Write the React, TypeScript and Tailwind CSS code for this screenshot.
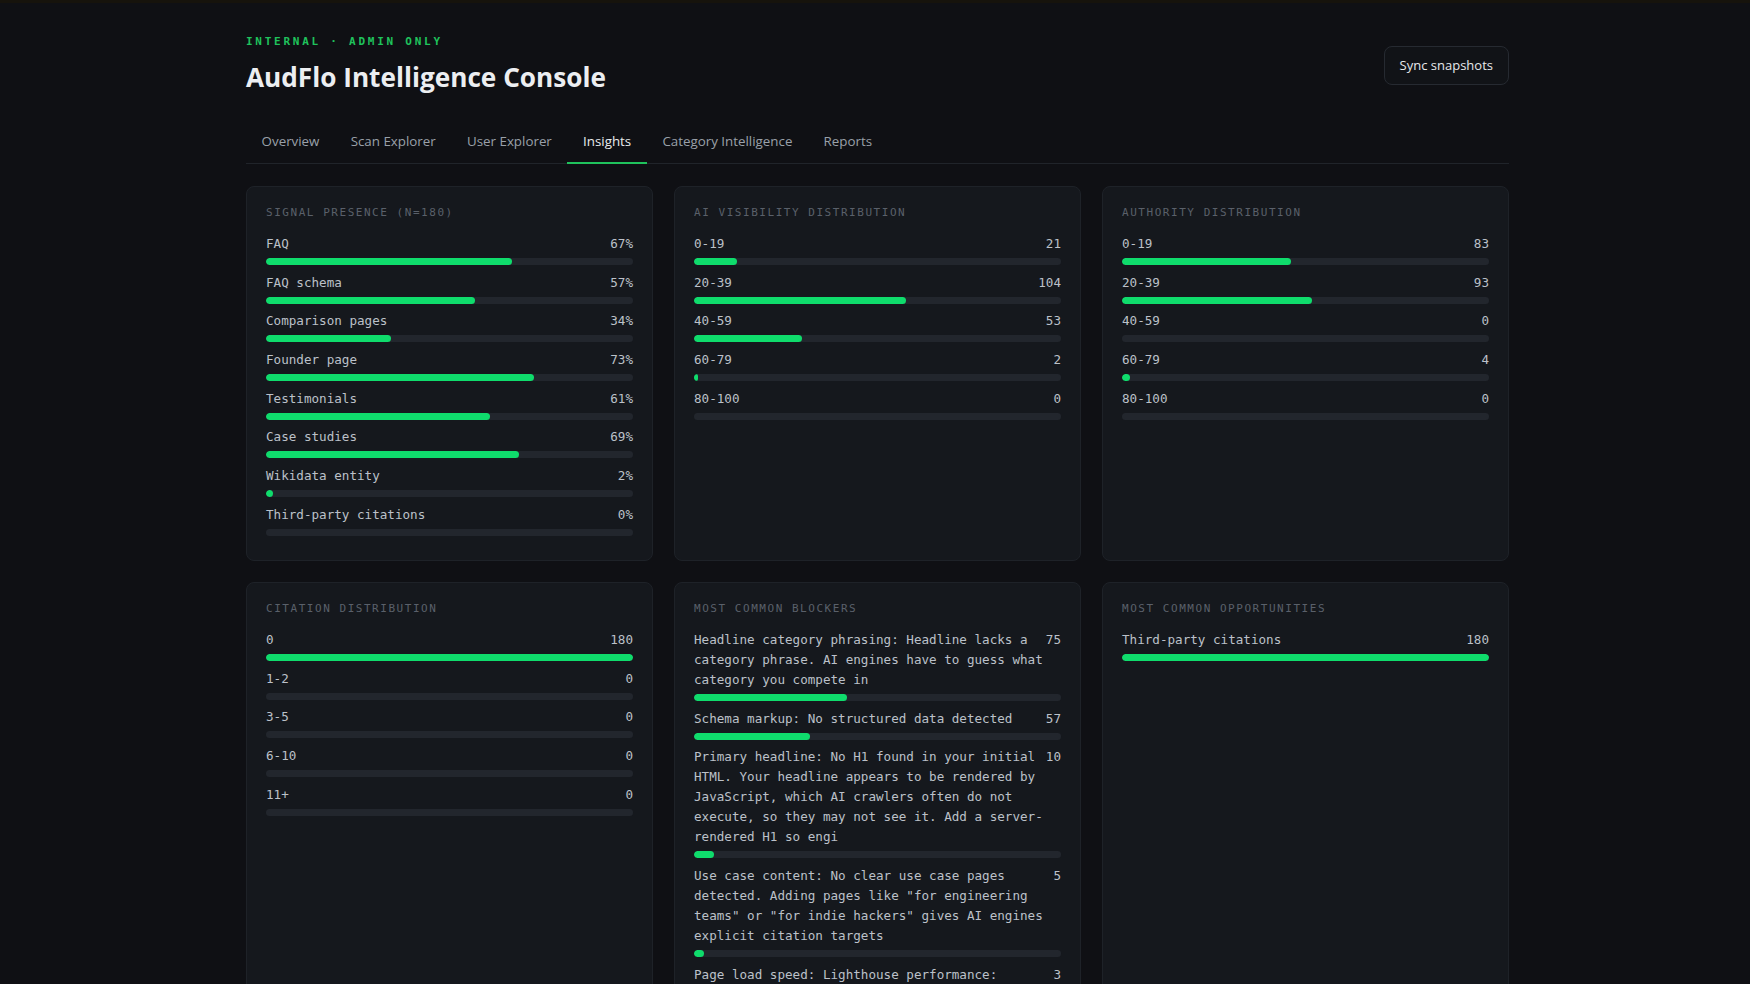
import React from "react";

type Row = { label: string; value: string; pct: number };

const MONO = "font-['DejaVu_Sans_Mono','Liberation_Mono',monospace]";

function Bar({ pct }: { pct: number }) {
  return (
    <div className="mt-[4px] h-[7px] w-full rounded-full bg-[#22262d] overflow-hidden">
      <div className="h-full rounded-full bg-[#0fdc6c]" style={{ width: `${pct}%` }} />
    </div>
  );
}

function Card({ title, rows }: { title: string; rows: Row[] }) {
  return (
    <div className="rounded-lg border border-[#1e2228] bg-[#15181d] px-[19px] pt-[20px] pb-[24px]">
      <div className={`${MONO} text-[11px] leading-[12px] tracking-[0.14em] text-[#5a606a] uppercase`}>{title}</div>
      <div className="mt-[15px] flex flex-col gap-[7.7px]">
        {rows.map((r, i) => (
          <div key={i}>
            <div className={`${MONO} flex items-start justify-between text-[12.6px] leading-[20px] text-[#bcc1c9]`}>
              <span className="min-w-0 flex-1">{r.label}</span>
              <span className="shrink-0 text-right">{r.value}</span>
            </div>
            <Bar pct={r.pct} />
          </div>
        ))}
      </div>
    </div>
  );
}

const signal: Row[] = [
  { label: "FAQ", value: "67%", pct: 67 },
  { label: "FAQ schema", value: "57%", pct: 57 },
  { label: "Comparison pages", value: "34%", pct: 34 },
  { label: "Founder page", value: "73%", pct: 73 },
  { label: "Testimonials", value: "61%", pct: 61 },
  { label: "Case studies", value: "69%", pct: 69 },
  { label: "Wikidata entity", value: "2%", pct: 2 },
  { label: "Third-party citations", value: "0%", pct: 0 },
];

const N = 180;
const dist = (labels: string[], vals: number[]): Row[] =>
  labels.map((l, i) => ({ label: l, value: String(vals[i]), pct: (vals[i] / N) * 100 }));

const ranges = ["0-19", "20-39", "40-59", "60-79", "80-100"];
const visibility = dist(ranges, [21, 104, 53, 2, 0]);
const authority = dist(ranges, [83, 93, 0, 4, 0]);
const citation = dist(["0", "1-2", "3-5", "6-10", "11+"], [180, 0, 0, 0, 0]);

const blockers = dist(
  [
    "Headline category phrasing: Headline lacks a category phrase. AI engines have to guess what category you compete in",
    "Schema markup: No structured data detected",
    "Primary headline: No H1 found in your initial HTML. Your headline appears to be rendered by JavaScript, which AI crawlers often do not execute, so they may not see it. Add a server-rendered H1 so engi",
    'Use case content: No clear use case pages detected. Adding pages like "for engineering teams" or "for indie hackers" gives AI engines explicit citation targets',
    "Page load speed: Lighthouse performance: 38/100. Slow pages may be skipped by AI crawlers",
  ],
  [75, 57, 10, 5, 3]
);

const opportunities = dist(["Third-party citations"], [180]);

const tabs = ["Overview", "Scan Explorer", "User Explorer", "Insights", "Category Intelligence", "Reports"];

export default function App() {
  return (
    <div className="min-h-screen bg-[#0f1014] font-['Open_Sans','Noto_Sans',sans-serif]">
      <div className="h-[3px] bg-[#16130c]" />
      <div className="ml-[246px] w-[1263px] pt-[31px] pb-10">
        <div className="flex items-start justify-between">
          <div>
            <div className={`${MONO} text-[11px] font-bold leading-[16px] tracking-[0.25em] text-[#1fc25c]`}>
              INTERNAL · ADMIN ONLY
            </div>
            <h1 className="mt-[11px] text-[26.2px] font-bold leading-[32px] text-[#eceef1]">AudFlo Intelligence Console</h1>
          </div>
          <button className="mt-[12px] h-[39px] rounded-lg border border-[#262a31] bg-[#111317] px-[15px] text-[13px] text-[#e6e8eb]">
            Sync snapshots
          </button>
        </div>

        <nav className="mt-[27px] flex border-b border-[#20242a]">
          {tabs.map((t) => (
            <div
              key={t}
              className={
                t === "Insights"
                  ? "-mb-px border-b-2 border-[#1fc25c] px-[15.6px] pt-[11px] pb-[11px] text-[13.35px] leading-[20px] text-[#e9ebee]"
                  : "-mb-px border-b-2 border-transparent px-[15.6px] pt-[11px] pb-[11px] text-[13.35px] leading-[20px] text-[#9aa0a9]"
              }
            >
              {t}
            </div>
          ))}
        </nav>

        <div className="mt-[22px] grid grid-cols-3 gap-x-[21px] gap-y-[21px]">
          <Card title="Signal presence (n=180)" rows={signal} />
          <Card title="AI visibility distribution" rows={visibility} />
          <Card title="Authority distribution" rows={authority} />
          <Card title="Citation distribution" rows={citation} />
          <Card title="Most common blockers" rows={blockers} />
          <Card title="Most common opportunities" rows={opportunities} />
        </div>
      </div>
    </div>
  );
}
